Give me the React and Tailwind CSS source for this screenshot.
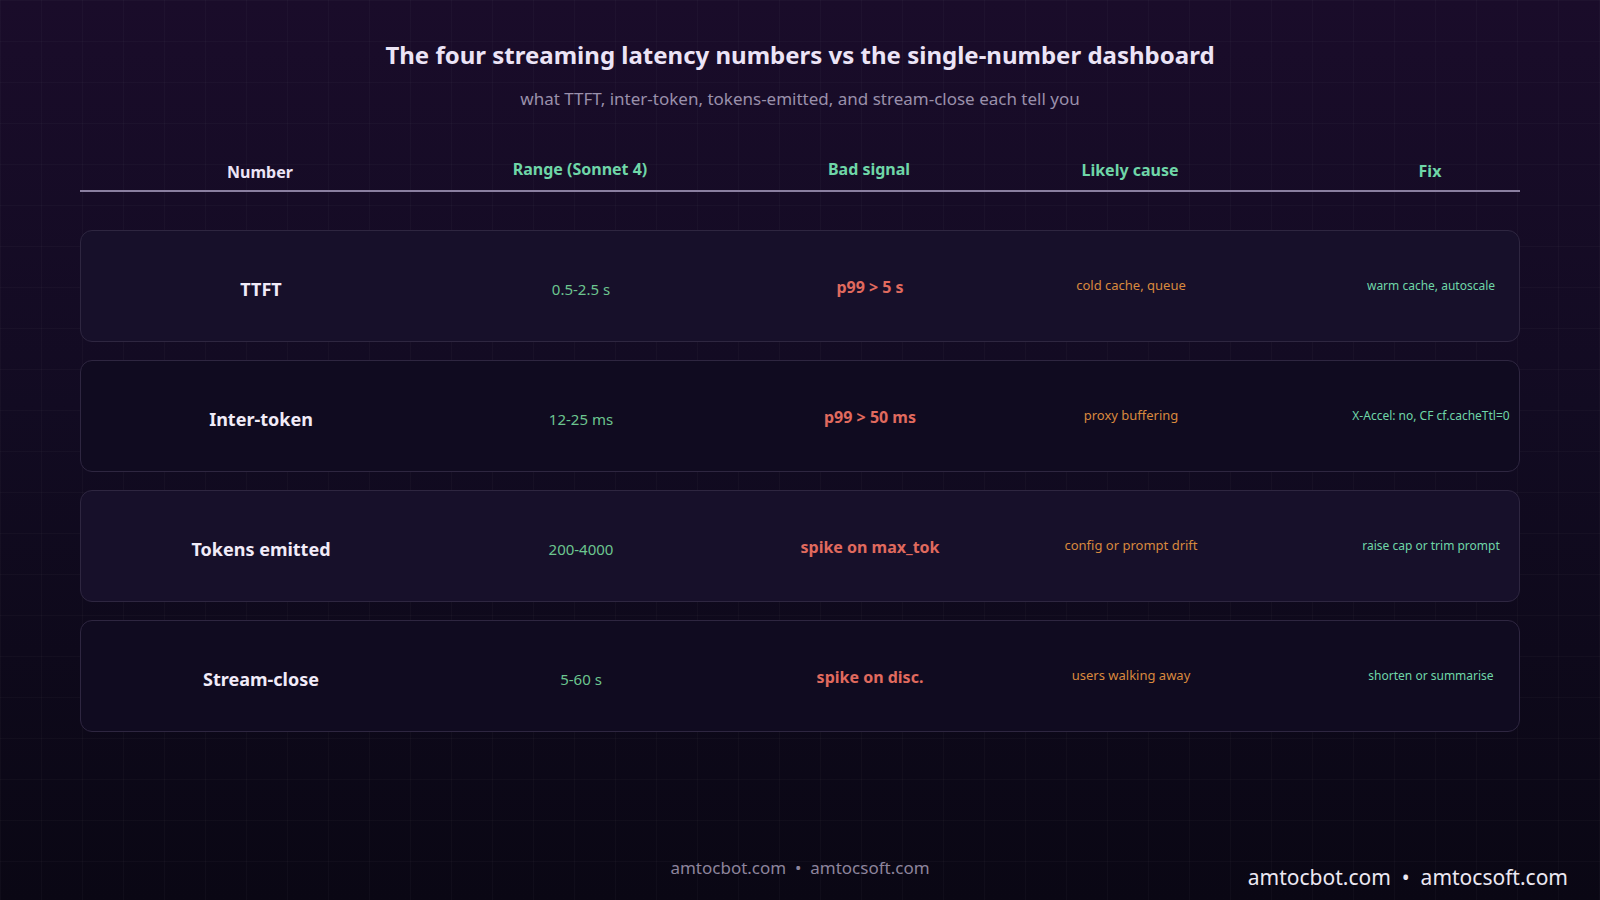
export default function App() {
  const rows = [
    ["TTFT", "0.5-2.5 s", "p99 > 5 s", "cold cache, queue", "warm cache, autoscale", "bg-[#17102a]"],
    ["Inter-token", "12-25 ms", "p99 > 50 ms", "proxy buffering", "X-Accel: no, CF cf.cacheTtl=0", "bg-[#100b20]"],
    ["Tokens emitted", "200-4000", "spike on max_tok", "config or prompt drift", "raise cap or trim prompt", "bg-[#17102a]"],
    ["Stream-close", "5-60 s", "spike on disc.", "users walking away", "shorten or summarise", "bg-[#100b20]"],
  ];
  const cols = "grid grid-cols-[360px_280px_298px_224px_278px] w-[1440px]";
  return (
    <div className="relative w-[1600px] h-[900px] overflow-hidden bg-[linear-gradient(rgba(255,255,255,0.025)_1px,transparent_1px),linear-gradient(90deg,rgba(255,255,255,0.025)_1px,transparent_1px),linear-gradient(180deg,#1a0c2a_0%,#120b22_45%,#0a0714_100%)] bg-[length:41px_41px,41px_41px,100%_100%] [font-family:'Liberation_Sans',Arial,sans-serif]">
      <div className="flex flex-col items-center pt-[40px]">
        <h1 className="text-[24px] font-bold text-[#ece4f6] leading-[30px]">The four streaming latency numbers vs the single-number dashboard</h1>
        <p className="mt-[18px] text-[17px] text-[#9a90ab] leading-[22px]">what TTFT, inter-token, tokens-emitted, and stream-close each tell you</p>
      </div>
      <div className="ml-[80px] mt-[38px] w-[1440px]">
        <div className={`${cols} h-[44px] items-center border-b-2 border-[#8a7fa0] text-[16px] font-bold`}>
          <div className="text-center text-[#ece4f6] pt-[6px]">Number</div>
          <div className="text-center text-[#6fd6a8]">Range (Sonnet 4)</div>
          <div className="text-center text-[#6fd6a8]">Bad signal</div>
          <div className="text-center text-[#6fd6a8] pt-[2px]">Likely cause</div>
          <div className="text-center text-[#6fd6a8] pt-[4px] pl-[98px]">Fix</div>
        </div>
        <div className="mt-[38px] flex flex-col gap-[18px]">
          {rows.map((r) => (
            <div key={r[0]} className={`${cols} h-[112px] items-center rounded-[12px] border border-[#2e2640] ${r[5]}`}>
              <div className="text-center text-[18px] font-bold text-[#f1ebf8] pt-[6px]">{r[0]}</div>
              <div className="text-center text-[15px] text-[#6cc58f] pt-[6px]">{r[1]}</div>
              <div className="text-center text-[16px] font-bold text-[#e06a5e] pt-[2px]">{r[2]}</div>
              <div className="text-center text-[13px] text-[#d9893e]">{r[3]}</div>
              <div className="text-center text-[12px] text-[#6fd6a8] whitespace-nowrap pl-[98px]"><span className="inline-block w-[176px] text-center">{r[4]}</span></div>
            </div>
          ))}
        </div>
      </div>
      <div className="absolute left-0 right-0 top-[855px] text-center text-[17px] text-[#8d849c]">amtocbot.com&nbsp; •&nbsp; amtocsoft.com</div>
      <div className="absolute right-[32px] top-[862px] text-[21px] text-[#ece8f2]">amtocbot.com&nbsp; •&nbsp; amtocsoft.com</div>
    </div>
  );
}
